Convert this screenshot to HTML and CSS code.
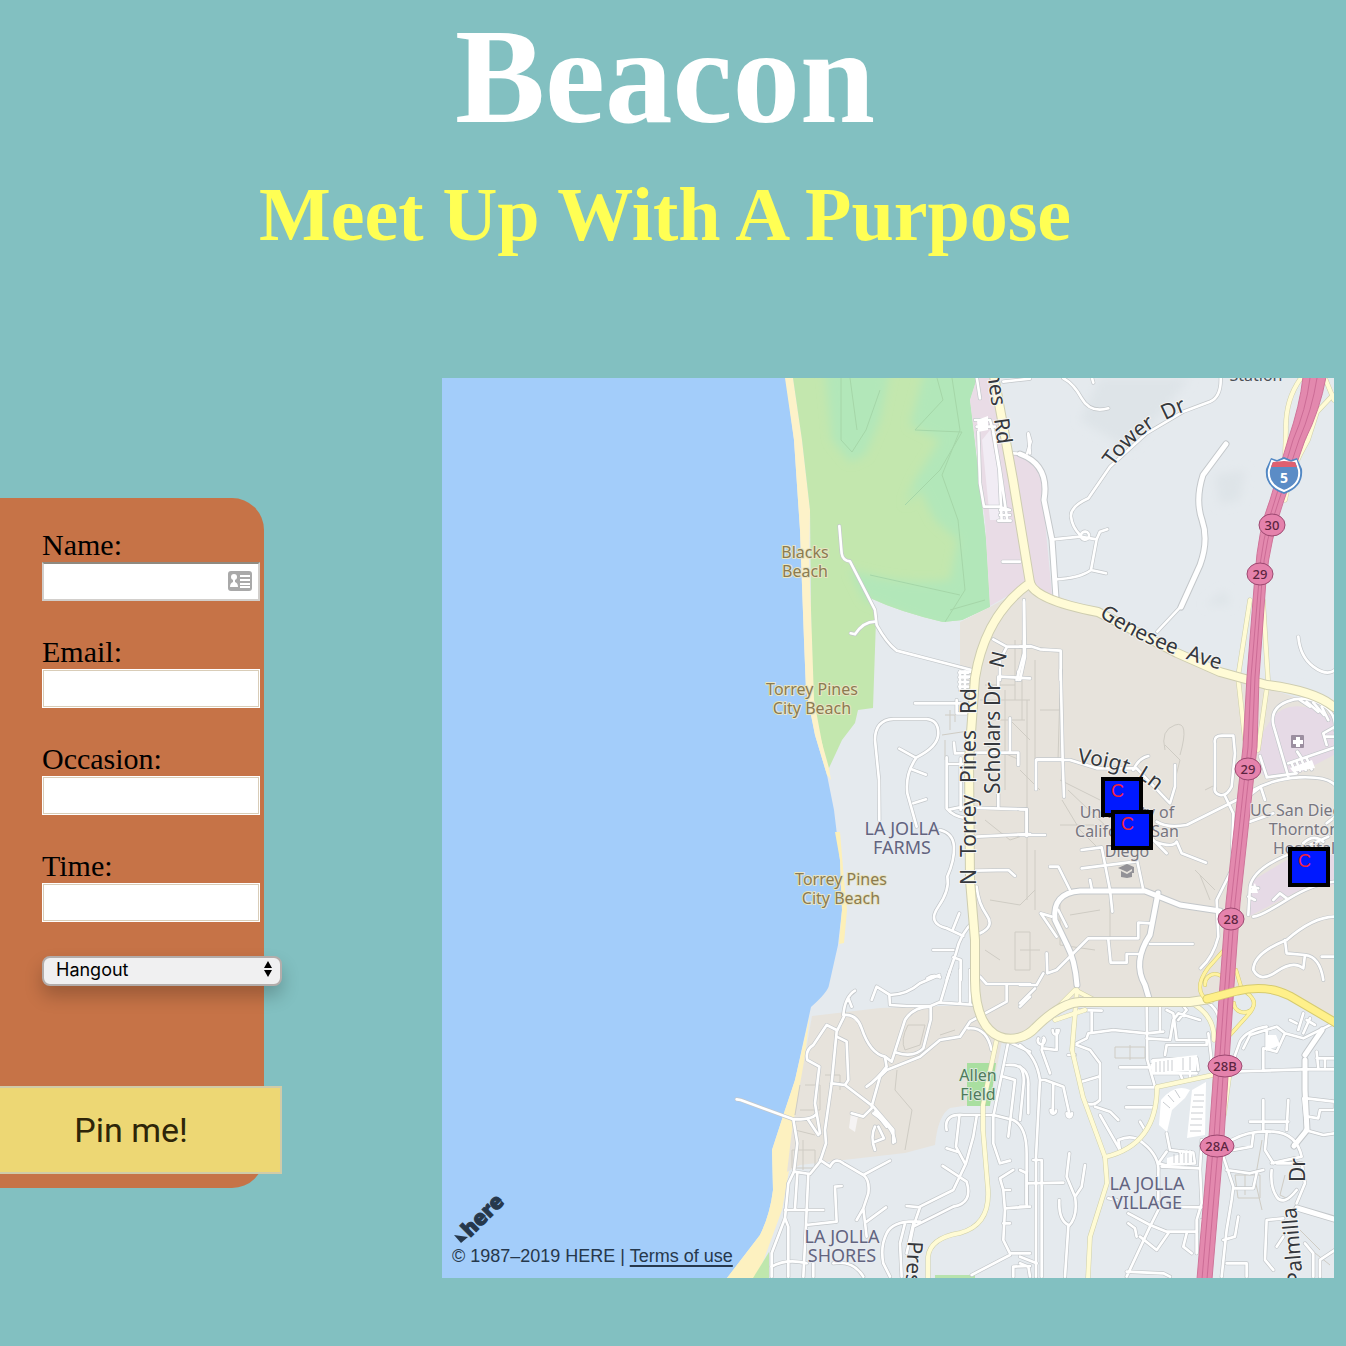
FILE: index.html
```html
<!DOCTYPE html>
<html lang="en">
<head>
<meta charset="utf-8">
<meta name="viewport" content="width=device-width, initial-scale=1">
<title>Beacon</title>
<link rel="stylesheet" href="styles.css">
</head>
<body>
<header class="masthead">
  <h1 class="title">Beacon</h1>
  <h2 class="tagline">Meet Up With A Purpose</h2>
</header>

<main class="layout">
  <form class="panel">
    <div class="fields">
      <div class="field">
        <label for="name">Name:</label>
        <div class="with-icon">
          <input class="inset" type="text" id="name">
          <svg class="card-icon" viewBox="0 0 24 20" aria-hidden="true">
            <rect width="24" height="20" rx="3" fill="#a9a9a9"/>
            <circle cx="6" cy="6" r="3" fill="#fff"/>
            <path d="M5 8h2v3q3 1 3 5H2q0-4 3-5z M12 4h10v2H12z M12 8h10v2H12z M12 12h10v2H12z M12 15h10v2H12z" fill="#fff"/>
          </svg>
        </div>
      </div>
      <div class="field"><label for="email">Email:</label><input type="text" id="email"></div>
      <div class="field"><label for="occasion">Occasion:</label><input type="text" id="occasion"></div>
      <div class="field"><label for="time">Time:</label><input type="text" id="time"></div>
      <div class="picker">
        <select aria-label="Category"><option>Hangout</option></select>
        <svg class="arrows" viewBox="0 0 8 16" aria-hidden="true"><path d="M4 0l4 7H0z M0 9h8l-4 7z"/></svg>
      </div>
    </div>
    <button class="pin-button" type="button">Pin me!</button>
  </form>

  <section class="map" aria-label="Map">
    <svg class="map-canvas" viewBox="442 378 892 900" preserveAspectRatio="xMidYMid slice">
      <defs>
        <filter id="soft" x="-20%" y="-20%" width="140%" height="140%"><feGaussianBlur stdDeviation="5"/></filter>
        <clipPath id="park"><path d="M790 378H977L970 400L978 470L986 540L990 607L962 620L943 622Q900 612 870 598L876 620L873 708L858 710L855 723L842 740L829 768L810 700Z"/></clipPath>
        <path id="tower" d="M1113 467Q1140 428 1186 411"/>
        <path id="genesee" d="M1099 616Q1150 652 1240 675"/>
        <path id="voigt" d="M1077 763Q1110 767 1127 774Q1140 777 1160 794"/>

        <g id="minor">
          <g transform="translate(720 370) scale(.3333)">
            <path d="M358 468L365 550Q368 572 390 574L465 720L470 765Q500 820 530 842L755 900"/>
            <path d="M392 790L405 793Q430 755 465 755"/>
            <path d="M770 20L780 85M850 35L930 26M775 185L780 340L792 410L835 410L870 420M765 150H810L820 185L840 300L862 450M820 190L838 300L845 450M770 170H825M840 420H868M840 435H870M835 452H872"/>
            <path d="M848 575H900M860 252Q900 245 930 265M925 195L930 250"/>
            <path d="M912 695V850L890 930M820 808L860 830H930M860 832L840 870V930M720 905H755M725 920H750"/>
          </g>
          <g transform="translate(1020 370) scale(.3333)">
            <path d="M130 25Q160 40 185 85T265 115M215 20L220 38M25 190L32 215L22 250"/>
            <path d="M602 20Q605 80 570 95L490 125L380 190L270 290L205 385Q150 410 153 440T180 495"/>
            <path d="M100 508L180 500L230 508L240 485L262 478M230 508L213 600L258 610M213 600Q180 625 105 628"/>
            <path d="M183 495a12 12 0 1 0 24 4a12 12 0 1 0-24-4"/>
            <path d="M480 712L412 785M835 800Q840 860 880 890T945 900"/>
            <path d="M12 690L15 860L0 930M0 830L30 828L60 838L122 842V930"/>
          </g>
          <g transform="translate(720 670) scale(.3333)">
            <path d="M478 450L477 330L465 210Q465 150 520 147H620Q655 150 655 190T590 262Q555 310 562 370L590 470"/>
            <path d="M538 236L585 262M575 298L618 314M580 400L618 388"/>
            <path d="M660 480Q700 490 702 530T682 620Q690 660 655 710T680 775L730 798"/>
            <path d="M718 730L698 780M765 750Q720 790 708 850L680 930M640 840H700M700 862L722 870V930M622 925Q640 912 660 922"/>
            <path d="M585 100H720M720 5V60M735 5V60M718 8H745M718 22H745M718 36H745M718 50H745M710 90V130H740"/>
            <path d="M702 218L705 250L780 248H895V285M680 262V415Q700 440 740 445M722 265V420M680 282H728M690 418L720 412L920 418V498M870 145V245M835 370V415"/>
            <path d="M770 500L930 492M765 602L865 600L885 618M770 650Q775 700 800 735T780 790M835 20V50M840 20L930 25M895 5V30"/>
          </g>
          <g transform="translate(1020 670) scale(.3333)">
            <path d="M122 0L128 270L132 380M48 358V270H150L230 295L350 295L450 400L465 350V285M340 300Q355 265 385 258M128 268H50"/>
            <path d="M585 220Q580 195 610 197H640L645 250L635 350Q620 380 600 375T585 350ZM615 378L640 430L635 600L590 690M590 690L595 800Q580 860 542 895"/>
            <path d="M410 455Q440 475 500 465L650 390M690 365Q760 325 840 322T945 345M405 515Q460 535 470 515L485 550L558 578M440 550L380 490"/>
            <path d="M720 258L740 320M805 320L760 165Q750 115 800 95T900 100T945 180M740 322L830 310M805 280L945 232M832 245L845 265M815 280L825 305M830 275L840 302M845 270L857 300M860 265L875 298"/>
            <path d="M840 90L870 110M860 95L895 125M880 98L912 135M905 110L925 150M945 170L910 190L920 225M915 200H945"/>
            <path d="M722 350L735 390M720 352L690 375M690 455L760 430M685 735L690 650Q700 600 790 560T925 500M945 635Q880 640 800 690T700 740M690 650L715 655M685 680L705 690M760 690L780 670L800 685M850 520Q880 490 910 515M920 460L945 440"/>
            <path d="M945 740Q880 740 800 810Q700 850 700 900Q720 940 770 905T850 895L855 855L800 850L795 810M855 855Q900 860 910 930M905 860H945"/>
            <path d="M0 418H20V495H75M0 495H20M90 590L115 590L150 660M185 540L245 532L270 660L277 725M185 595L345 575M350 565L370 660M210 630L215 655M110 800L62 730L95 740M140 770L115 720"/>
            <path d="M80 850L82 910L110 900L205 805H355V758L395 760M265 810L272 878H320V852H355M390 822H518"/>
          </g>
          <g transform="translate(720 970) scale(.3333)">
            <path d="M50 388L62 390L220 448Q280 450 290 430M220 448L232 520L222 605M265 450L295 495M300 490L285 400L298 290L262 270Q255 240 280 225L320 165L350 180"/>
            <path d="M370 135Q375 80 405 62M385 85L395 110M372 140L350 185L335 340L315 480L318 520L300 575L270 612L222 605L205 640L195 745L155 850V920M370 135Q410 130 425 175Q450 250 495 260L515 275L555 150Q580 110 632 110L632 150L610 235Q580 265 530 248"/>
            <path d="M455 90L470 50L510 75Q560 75 600 40L658 15M508 75L510 105L560 108L632 108L662 95L690 0M660 98L770 105M720 0V100M750 0V100"/>
            <path d="M350 200L380 215L385 330L375 345L335 340M375 345L460 410L520 480L520 518M465 425L500 470M495 262L500 290Q470 330 440 350M455 410L480 320L500 300L600 260L660 210L720 200L750 155L860 95V45M780 20L800 42H930M745 175Q800 170 815 240M900 110L930 80"/>
            <path d="M455 415L430 440L395 430M460 430Q520 470 525 515M465 470Q450 500 465 540M465 515L492 505L475 470"/>
            <path d="M300 570L330 590Q345 560 370 580L430 615L510 572M430 615Q450 630 445 670L430 715L440 800M430 715L410 750M440 755L498 712M232 610L225 715M265 612L258 765L350 755L345 650L365 648M195 720H310M195 745L205 770V920M155 890Q200 865 260 880M258 765L250 920M280 880V920M340 880Q400 870 430 920"/>
            <path d="M680 480Q670 430 730 435H820L880 450Q920 470 920 550V700M718 440L708 530L735 580M680 535L712 545M770 440L760 500L738 580L700 660L600 710M668 588L740 635Q760 700 700 710L580 770M560 708L600 712L580 770L570 820M600 755Q520 750 500 790T490 880L510 920M555 760L540 820L545 920M580 760L560 850"/>
            <path d="M865 215L820 440L820 520L840 580L870 572M860 285Q930 280 925 350V430M850 320L885 330L865 500M880 600L840 625L850 660L855 720L850 810L870 850L930 850M850 660H870M855 715L930 710M850 760H870M870 855L755 915M880 890L930 888M880 890V920M865 215L930 245"/>
          </g>
          <g transform="translate(1020 970) scale(.3333)">
            <path d="M0 225Q50 260 60 330L48 560V920M0 290Q15 310 10 350L0 450M62 330L75 330L130 350L150 440M100 340L98 430M70 210L65 240L90 310M70 235L110 240V180M55 205a10 12 0 1 0 16-2M98 180a8 12 0 1 0 18 0M92 420a8 10 0 1 0 16 2M140 430a8 12 0 1 0 16 0M0 45H50L70 10M0 100L45 55"/>
            <path d="M175 120L245 122M215 125V185M170 220L200 205L205 190L280 180L380 190L430 185M170 225L210 240L240 280L240 390Q220 410 200 400M185 335L235 320M145 255L165 255"/>
            <path d="M380 85L382 270L405 350M300 292H400M325 352H410M318 412H400M380 205L450 210L460 150L475 130L540 150M420 90V180M440 120L460 130L470 210H560V225M440 225H560M440 225L435 255M475 90L500 120L475 150"/>
            <path d="M400 270L530 265L535 300M395 285L400 310H530M560 95Q600 120 600 170M565 190L580 315M480 310L490 335M510 305V330"/>
            <path d="M240 435L300 540M225 410L270 425L295 450M360 455L375 480M370 520Q420 560 415 610V690M300 540L295 510Q340 490 370 520M440 490L450 540L520 548L525 580L435 585L415 580L440 545M545 510L540 600M425 590L540 595L545 700L530 750V850"/>
            <path d="M480 545V582M490 545V582M500 545V582M510 545V582"/>
            <path d="M630 305L850 298L945 298M730 300V235L770 245L795 190M670 235L690 195L770 170L795 190L850 205L940 160M640 270L660 215Q680 180 740 170M740 180V235M850 130L835 180M870 145L850 190M860 150L885 165M830 160L810 150M890 245L895 295M890 265H945M915 265V290"/>
            <path d="M635 510Q690 480 760 485T845 560L755 580M730 390V480M690 455H805M805 390L800 480M740 490L735 540L760 580M850 385L860 480L820 525M860 385L945 395V420L900 420L895 445L865 440M855 480L910 495L945 490M700 490L695 530L640 540"/>
            <path d="M610 560L640 650L635 690L620 780L605 920M620 600L690 610L730 600M640 655H700L710 610M755 600Q750 650 770 680T830 660M770 580H845L855 640L830 700M655 740L645 800L610 810M620 880H680V920M790 745L740 750L735 870L760 900M790 800L770 830M945 840L900 870V920M855 820L880 850V920"/>
            <path d="M148 550L140 620L165 680Q175 740 145 770L135 920M195 585L185 650L165 680M118 690Q115 750 145 765M20 640L130 638M0 600L20 610V710H0M0 880L25 890L30 920M0 860L50 880M40 570L65 570V920"/>
            <path d="M415 720L390 770L320 920M325 730L390 765L440 785L530 785M415 710L545 712M325 760L345 775L350 800M360 800L410 840L445 790M545 750V920M500 790L490 830L515 850M320 905L430 910L450 920M265 685L290 690"/>
          </g>
        </g>

        <g id="medium">
          <path d="M1020 454Q1050 465 1044 500L1052 540L1056 598"/>
          <path d="M1226 444L1203 475Q1195 500 1202 520T1200 565L1181 607"/>
          <path d="M1077 985Q1075 960 1067 945L1055 920Q1052 893 1080 891H1145L1180 905L1220 911"/>
          <path d="M1158 893L1150 935Q1132 962 1145 985L1150 1002"/>
          <path d="M1297 1208L1334 1219"/>
          <path d="M1305 1060V1090L1307 1130L1294 1146M1305 1055L1322 1030"/>
        </g>

        <g id="arterial">
          <path d="M994 376L1013 480L1030 583Q985 615 975 678L969 760L970 880L975 940V980C975 1050 1020 1045 1035 1028Q1060 1003 1080 1002H1190L1210 999"/>
          <path d="M1030 583Q1035 600 1098 612L1177 653L1220 672L1267 685Q1315 691 1334 707"/>
        </g>

        <g id="collector">
          <path d="M1077 990L1072 1050L1083 1097L1105 1157L1107 1183L1090 1237L1088 1278"/>
          <path d="M1105 1157Q1157 1145 1157 1087L1213 1075M1050 1015L1075 990L1100 1003M1055 1020L1085 1010"/>
          <path d="M997 1038L983 1105V1130L988 1190Q990 1225 960 1233Q930 1238 928 1257V1278"/>
          <path d="M1333 395L1317 412L1308 440Q1290 470 1285 500M1301 378Q1285 400 1286 430L1285 455M1325 378L1334 400M1250 600L1238 677L1245 740M1263 600L1268 680L1258 750M1215 1080L1213 1125M1230 1070L1224 1115M1190 1002Q1215 1015 1214 1040"/>
        </g>

        <g id="ramp">
          <path d="M1224 950L1208 968Q1192 990 1208 1001M1205 985a10 10 0 1 1 18 5M1236 970L1242 990Q1262 1000 1248 1015L1230 1035M1234 1003a10 9 0 1 0 18-5"/>
        </g>
        <path id="bypass" d="M1207 999L1237 991Q1267 984 1290 996L1336 1023"/>
        <g id="shape-marker">
          <rect x="2" y="2" width="38" height="36" fill="#0019ff" stroke="#000" stroke-width="4"/>
          <text x="10" y="20" class="marker-text">C</text>
        </g>
      </defs>

      <rect x="-600" y="0" width="3000" height="1800" fill="#e5eaee"/>
      <g filter="url(#soft)" fill="#dee4e8">
        <path d="M1100 378H1190L1130 450L1080 420Z M1215 475L1245 470L1240 500L1220 505Z M1205 605L1225 590L1230 605Z"/>
      </g>
      <path d="M-600 0H786V378L794 440L800 530L804 640L806 690L815 735L827 775L834 810L840 860L842 910L838 945L829 985Q828 992 811 1007L795 1080L785 1110L772 1150L773 1190Q770 1215 760 1235L727 1278V1800H-600Z" fill="#a3cdfa"/>
      <path d="M785 378H793L802 440L810 510L809 560L811 610L814 680L831 780L827 775L815 735L806 690L804 640L800 530L794 440Z" fill="#fdf2c9"/>
      <path d="M835 832H840L844 880L847 910L844 943L839 944L842 910L840 860Z" fill="#fdf0b8"/>
      <path d="M810 1015L800 1095L790 1165L782 1210L757 1278H727L760 1235Q770 1215 773 1190L772 1150L785 1110L795 1080Z" fill="#fdf1c0"/>
      <path d="M753 1278L769 1252V1278Z" fill="#bfe7ad"/>

      <g clip-path="url(#park)">
        <path d="M785 370H1000V780H829L814 700L811 610L810 510L802 440L793 378Z" fill="#c3e7ae"/>
        <g filter="url(#soft)" fill="#b2e7b9">
          <path d="M825 370H890L880 420L865 455L850 462L832 440Z"/>
          <path d="M925 370H1000V630H940L865 600L850 570L870 575Q910 585 950 580L958 540L935 520L920 490L905 505L915 480L940 440L910 425Z"/>
        </g>
        <path d="M841 378V440L852 452L866 430L880 390M850 378L857 430M937 378L943 400L915 430L962 432L940 470L905 505M952 378L960 430L942 475L958 520L965 590L945 622M870 575L960 595M950 610L985 600" fill="none" stroke="#a5d6a8" stroke-width="1"/>
      </g>

      <path d="M1030 585L1098 612L1177 653L1334 707V1022L1267 988L1207 1001H1080Q1055 1006 1030 1032L1000 1035L975 1005L968 700L960 680V622L990 607Z" fill="#e7e3dc"/>
      <path d="M812 1016L880 1008L975 1005L1003 1036L990 1102L950 1108Q938 1115 935 1145L905 1153L800 1165L787 1172L792 1130Z" fill="#e7e3dc"/>
      <path d="M1240 679L1334 710V690Q1300 672 1270 678Z" fill="#e5eaee"/>
      <path d="M970 400L977 378H993L1010 455H1028Q1045 465 1043 500L1052 595L1030 583L990 606L985 520Z" fill="#e9dce6"/>
      <path d="M982 440L990 430L1008 520H990Z" fill="#f1ecf4"/>
      <path d="M1258 740L1272 718Q1290 695 1334 717V755L1290 778L1262 775Z" fill="#e6dae6"/>
      <path d="M1250 882L1290 858L1334 850V885L1300 890L1250 916Z" fill="#e6dae6"/>
      <path d="M967 1063H996L990 1106H967Z" fill="#a9dfa0"/>
      <path d="M935 1275H975V1279H935Z" fill="#b7e3ad"/>

      <g class="footpaths">
        <path d="M1027 700V900M1035 660V780M1022 640V720M1040 710H1060M1060 690L1058 760M1062 800L1080 830L1100 850M1068 790L1110 830M1060 825H1110M1060 780L1100 800M1165 745L1180 760L1175 780M1165 750Q1160 730 1175 725T1180 755M1195 870L1215 890M1200 875L1210 900M1205 790L1215 785"/>
        <path d="M985 820L1010 840L1025 835M990 900L1020 905L1035 890M1015 932H1030V970H1015ZM1020 950H1040M985 950L1000 960M1060 900V945L1095 950M1110 900V940M1070 915L1100 910M1035 850V910"/>
        <path d="M985 685H1015M980 700H1030M1005 690V790M990 720H1025M1010 720L1030 740M985 745L1020 760M1015 640V700M1020 770L1040 790"/>
        <path d="M1115 1047H1145V1058H1115ZM1130 1045V1060M1235 1175H1260V1198H1238ZM1245 1175V1195M1262 1140L1255 1180L1262 1210M1285 1175L1280 1195L1290 1200M1300 1230L1320 1250M1305 1245L1330 1265"/>
        <path d="M800 1085L795 1115M805 1085H820V1110H800M792 1150H815V1168H792ZM803 1140V1170M795 1130L815 1135M908 1025Q900 1040 905 1050L920 1045L925 1025ZM897 1070L895 1090L912 1110L905 1150M940 1035L955 1030M825 1075H840V1090"/>
        <path d="M975 730L942 735M945 740V760M950 710V730M945 715H955V722"/>
      </g>
      <path d="M851 1113L858 1116L855 1132L849 1128Z" fill="#f5f3f3"/>

      <use href="#medium" class="road medium-case"/>
      <use href="#minor" class="road minor-case"/>
      <use href="#minor" class="road minor-fill"/>
      <use href="#medium" class="road medium-fill"/>

      <g class="parking">
        <path d="M1151 1060L1178 1057L1197 1055L1196 1071L1153 1073ZM1161 1100Q1175 1083 1190 1090L1185 1098L1172 1110L1167 1132L1159 1125ZM1192 1090L1206 1082L1205 1135L1187 1138ZM1167 1158L1192 1151V1164H1167Z"/>
        <path d="M977 420L988 416V430L978 432ZM1266 1035H1276L1280 1045L1266 1051ZM1249 893L1255 883L1258 893ZM1290 768L1312 760L1315 768L1293 772Z"/>
      </g>
      <path class="stripes" d="M1156 1062V1072M1160 1061V1072M1164 1061V1072M1168 1060V1071M1172 1060V1071M1183 1058V1070M1190 1057V1070M1163 1102L1170 1108M1168 1095L1174 1102M1175 1090L1180 1098M1194 1095H1204M1193 1101H1204M1192 1107H1203M1191 1113H1203M1191 1119H1202M1190 1125H1202M1190 1131H1201M1174 1154V1163M1179 1153V1163M1184 1153V1163M1188 1153V1163"/>

      <use href="#collector" class="road collector-case"/>
      <use href="#collector" class="road collector-fill"/>
      <use href="#arterial" class="road arterial-case"/>
      <use href="#arterial" class="road arterial-fill"/>
      <use href="#ramp" class="road ramp-case"/>
      <use href="#ramp" class="road ramp-fill"/>

      <path d="M1303 377H1326Q1320 410 1305 440L1284 500Q1270 540 1266 580L1259 677L1257 747L1240 903L1234 985L1224 1137L1212 1279H1197L1209 1137L1220 985L1226 903L1243 747L1247 677L1255 575Q1258 530 1270 500L1288 440Q1300 405 1303 377Z" fill="#e389ae" stroke="#cf749a"/>
      <path class="lanes" d="M1310 378Q1306 410 1293 440L1275 500Q1261 540 1259 580L1251 677L1248 747L1231 903L1225 985L1214 1137L1202 1279M1317 378Q1312 410 1299 440L1279 500Q1265 540 1262 580L1255 677L1252 747L1235 903L1229 985L1219 1137L1207 1279"/>
      <use href="#bypass" class="road bypass-case"/>
      <use href="#bypass" class="road bypass-fill"/>

      <g class="exits">
        <ellipse cx="1272" cy="525" rx="13" ry="11"/><text x="1272" y="530">30</text>
        <ellipse cx="1260" cy="574" rx="13" ry="11"/><text x="1260" y="579">29</text>
        <ellipse cx="1248" cy="769" rx="13" ry="11"/><text x="1248" y="774">29</text>
        <ellipse cx="1231" cy="919" rx="13" ry="11"/><text x="1231" y="924">28</text>
        <ellipse cx="1225" cy="1066" rx="17" ry="11"/><text x="1225" y="1071">28B</text>
        <ellipse cx="1217" cy="1146" rx="17" ry="11"/><text x="1217" y="1151">28A</text>
      </g>
      <path d="M1271 458L1277 460L1284 457L1291 460L1297 458L1302 469Q1304 487 1284 494Q1264 487 1266 469Z" fill="#5288c4"/>
      <path d="M1272 461L1277 463L1284 460L1291 463L1296 461L1299 470Q1301 485 1284 491Q1267 485 1269 470Z" fill="#5b8cc6" stroke="#fff" stroke-width="2"/>
      <path d="M1273 462L1284 461L1295 462L1297 467H1271Z" fill="#df6070"/>
      <text class="shield" x="1284" y="483">5</text>

      <g class="place beach">
        <text x="805" y="558">Blacks</text><text x="805" y="577">Beach</text>
        <text x="812" y="695">Torrey Pines</text><text x="812" y="714">City Beach</text>
        <text x="841" y="885">Torrey Pines</text><text x="841" y="904">City Beach</text>
      </g>
      <g class="place district">
        <text x="902" y="835">LA JOLLA</text><text x="902" y="854">FARMS</text>
        <text x="1147" y="1190">LA JOLLA</text><text x="1147" y="1209">VILLAGE</text>
        <text x="842" y="1243">LA JOLLA</text><text x="842" y="1262">SHORES</text>
      </g>
      <g class="place field-name"><text x="978" y="1081">Allen</text><text x="978" y="1100">Field</text></g>
      <g class="place campus">
        <text x="1127" y="818">University of</text><text x="1127" y="837">California San</text><text x="1127" y="857">Diego</text>
        <text x="1301" y="816">UC San Diego</text><text x="1304" y="835">Thornton</text><text x="1304" y="854">Hospital</text>
      </g>
      <g fill="#939297">
        <path d="M1118 868L1127 864L1134 867V873H1132V869L1127 872ZM1121 871L1127 874L1132 871V877L1127 878L1121 877Z"/>
        <rect x="1291" y="735" width="13" height="13" rx="1" fill="#9c8fa0"/>
        <path d="M1296 737h4v3h3v4h-3v3h-4v-3h-3v-4h3z" fill="#fff"/>
      </g>

      <g class="street">
        <text transform="translate(976 885) rotate(-90)">N</text>
        <text transform="translate(976 857) rotate(-90)">Torrey</text>
        <text transform="translate(976 783) rotate(-90)">Pines</text>
        <text transform="translate(976 714) rotate(-90)">Rd</text>
        <text transform="translate(1000 794) rotate(-90)">Scholars</text>
        <text transform="translate(1000 706) rotate(-90)">Dr</text>
        <text transform="translate(1003 669) rotate(-75)">N</text>
        <text transform="translate(987 372) rotate(82)">nes</text>
        <text transform="translate(994 419) rotate(82)">Rd</text>
        <text><textPath href="#tower">Tower &#160;Dr</textPath></text>
        <text><textPath href="#genesee">Genesee &#160;Ave</textPath></text>
        <text><textPath href="#voigt">Voigt &#160;Ln</textPath></text>
        <text transform="translate(908 1241) rotate(93)">Pres</text>
        <text transform="translate(1305 1182) rotate(-90)">Dr</text>
        <text transform="translate(1303 1284) rotate(-95)">Palmilla</text>
      </g>
      <text class="station" x="1256" y="381">Station</text>

      <use href="#shape-marker" x="1101" y="777"/>
      <use href="#shape-marker" x="1111" y="810"/>
      <use href="#shape-marker" x="1288" y="847"/>
    </svg>
    <div class="credits">
      <svg class="logo" viewBox="0 0 54 48" role="img" aria-label="here">
        <path d="M2 38L16 40L9 46Z"/>
        <text transform="translate(18 41) rotate(-45)">here</text>
      </svg>
      <p class="legal">© 1987–2019 HERE | <a href="#terms">Terms of use</a></p>
    </div>
  </section>
</main>
</body>
</html>
```

FILE: styles.css
```css
* {
  box-sizing: border-box;
}

body {
  margin: 0;
  min-height: 100vh;
  background: #82c0c1;
  font-family: "Liberation Serif", serif;
  color: #000;
  overflow-x: hidden;
}

.masthead {
  padding-right: 16px;
  text-align: center;
}

.title {
  margin: 0;
  font-size: 135px;
  line-height: 154px;
  color: #fff;
}

.tagline {
  margin: 16px 0 0;
  font-size: 76px;
  line-height: 88px;
  color: #ffff54;
}

.layout {
  display: flex;
  align-items: flex-start;
  gap: 178px;
  margin-top: 120px;
  padding-right: 12px;
}

/* Form panel */

.panel {
  flex: 0 0 264px;
  min-width: 0;
  margin-top: 120px;
  padding: 30px 0 14px;
  background: #c67347;
  border-radius: 0 32px 32px 0;
}

.fields {
  display: flex;
  flex-direction: column;
  gap: 34px;
  margin-right: -18px;
  padding-left: 42px;
}

.field label {
  display: block;
  font-size: 30px;
  line-height: 34px;
}

.field input {
  display: block;
  width: 218px;
  height: 39px;
  padding: 0 8px;
  border: 1px solid #fff;
  border-radius: 0;
  background: #fff;
  box-shadow: inset 0 0 0 1px #d9cdb8;
  font: 18px Inter, sans-serif;
}

.field .inset {
  border: 2px solid #d2cfcc;
  border-top-color: #8f8a80;
  box-shadow: none;
}

.with-icon,
.picker {
  position: relative;
}

.card-icon {
  position: absolute;
  left: 186px;
  top: 9px;
  width: 24px;
  height: 20px;
}

.picker select {
  display: block;
  width: 100%;
  height: 30px;
  padding: 0 12px 2px;
  border: 2px solid #b3adab;
  border-radius: 8px;
  background: #f0f0f1;
  box-shadow: 0 10px 18px rgba(0, 0, 0, .22);
  appearance: none;
  font: 18px/22px Inter, sans-serif;
  color: #000;
}

.arrows {
  position: absolute;
  right: 10px;
  top: 5px;
  width: 8px;
  height: 16px;
}

.pin-button {
  display: block;
  width: 282px;
  height: 88px;
  margin-top: 100px;
  padding: 0 18px 0 0;
  border: 2px solid #d0cba8;
  border-left: 0;
  background: #edd774;
  font: 34px Roboto, sans-serif;
  color: #2e2508;
}

/* Map */

.map {
  position: relative;
  flex: 1;
  min-width: 0;
  overflow: hidden;
}

.map-canvas {
  display: block;
  width: 100%;
  height: 900px;
}

.road {
  fill: none;
  stroke-linecap: round;
  stroke-linejoin: round;
}

/* Minor roads are drawn at three times the map scale. */
.minor-case { stroke: #c3c7ca; stroke-width: 12px; }
.minor-fill { stroke: #fff; stroke-width: 8px; }
.medium-case { stroke: #c3c7ca; stroke-width: 7px; }
.medium-fill { stroke: #fff; stroke-width: 5px; }
.collector-case { stroke: #cfcfa9; stroke-width: 5px; }
.collector-fill { stroke: #fffbd5; stroke-width: 4px; }
.arterial-case { stroke: #cecdb0; stroke-width: 10px; }
.arterial-fill { stroke: #fffbd6; stroke-width: 8px; }
.ramp-case { stroke: #d3c970; stroke-width: 4px; }
.ramp-fill { stroke: #fff3a0; stroke-width: 3px; }
.bypass-case { stroke: #d6cb70; stroke-width: 9px; }
.bypass-fill { stroke: #fff08a; stroke-width: 7px; }

.footpaths {
  fill: none;
  stroke: #cfccc4;
  stroke-width: 1;
}

.parking { fill: #fff; }
.stripes { fill: none; stroke: #c9ccd0; stroke-width: 1; }
.lanes { fill: none; stroke: #cc6c96; stroke-width: 1; }

.exits ellipse { fill: #e582ac; stroke: #9c4870; stroke-width: 1; }
.exits text,
.shield {
  font: 500 13px "Noto Sans", sans-serif;
  fill: #5c2440;
  text-anchor: middle;
}
.shield { font-weight: 700; font-size: 14px; fill: #fff; }

.place {
  font: 16px "Noto Sans", sans-serif;
  text-anchor: middle;
  paint-order: stroke;
  stroke-width: 2;
  stroke-linejoin: round;
}
.beach { fill: #8b7b50; stroke: #e9e5c4; }
.district { font-size: 18px; fill: #62647f; stroke: #e9ecf1; }
.field-name { fill: #4f7a5c; stroke: #dbeadb; }
.campus { fill: #77767f; stroke: #ece9e6; }

.street {
  font: 21px "Noto Sans", sans-serif;
  fill: #35383d;
  stroke: #f4f4f2;
  stroke-width: 2;
  paint-order: stroke;
}

.station {
  font: 16px "Noto Sans", sans-serif;
  fill: #4b5057;
  text-anchor: middle;
}

.marker-text {
  font: 18px "Liberation Sans", sans-serif;
  fill: #f5223a;
}

.credits {
  position: absolute;
  left: 10px;
  bottom: 11px;
  color: #26384c;
}

.logo {
  display: block;
  width: 54px;
  height: 48px;
  overflow: visible;
  fill: #26384c;
}

.logo text {
  font: 800 21px "Open Sans", sans-serif;
  stroke: #26384c;
  stroke-width: 1;
}

.legal {
  margin: 0;
  font: 18px/22px "Liberation Sans", sans-serif;
}

.legal a {
  color: inherit;
  text-decoration: underline 2px;
  text-underline-offset: 3px;
}
```
